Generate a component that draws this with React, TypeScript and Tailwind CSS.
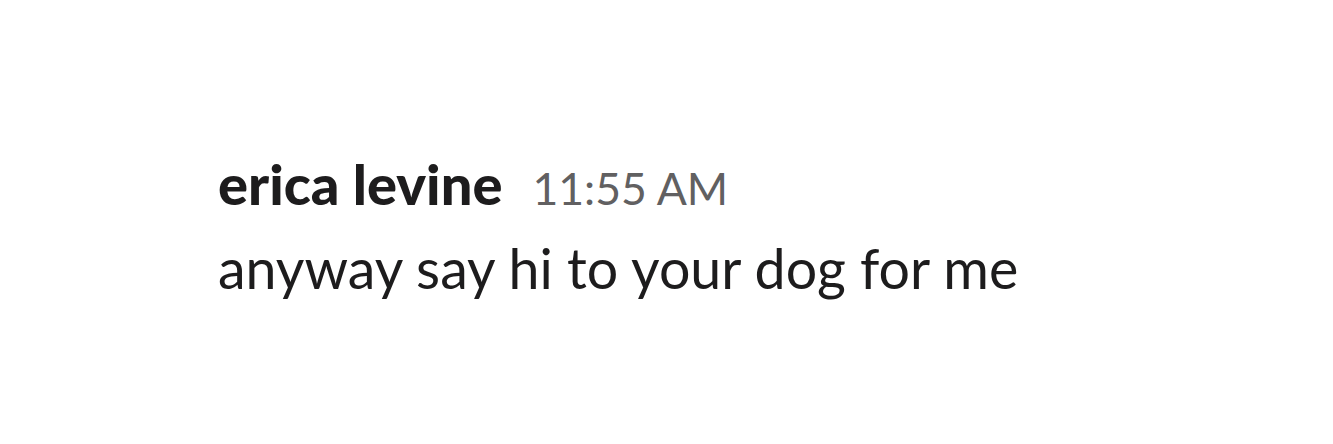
export default function App() {
  return (
    <div className="w-[1333px] h-[444px] bg-white" style={{ fontFamily: "Lato, 'Noto Sans', sans-serif" }}>
      <div className="pt-[156px] pl-[218px]">
        <div className="flex items-baseline gap-[30px] leading-[56px]">
          <span className="text-[56px] font-black text-[#1d1c1d]">erica levine</span>
          <span className="text-[44.5px] text-[#616061]">11:55 AM</span>
        </div>
        <div className="mt-[24px] text-[55.5px] leading-none text-[#1d1c1d]">anyway say hi to your dog for me</div>
      </div>
    </div>
  );
}
